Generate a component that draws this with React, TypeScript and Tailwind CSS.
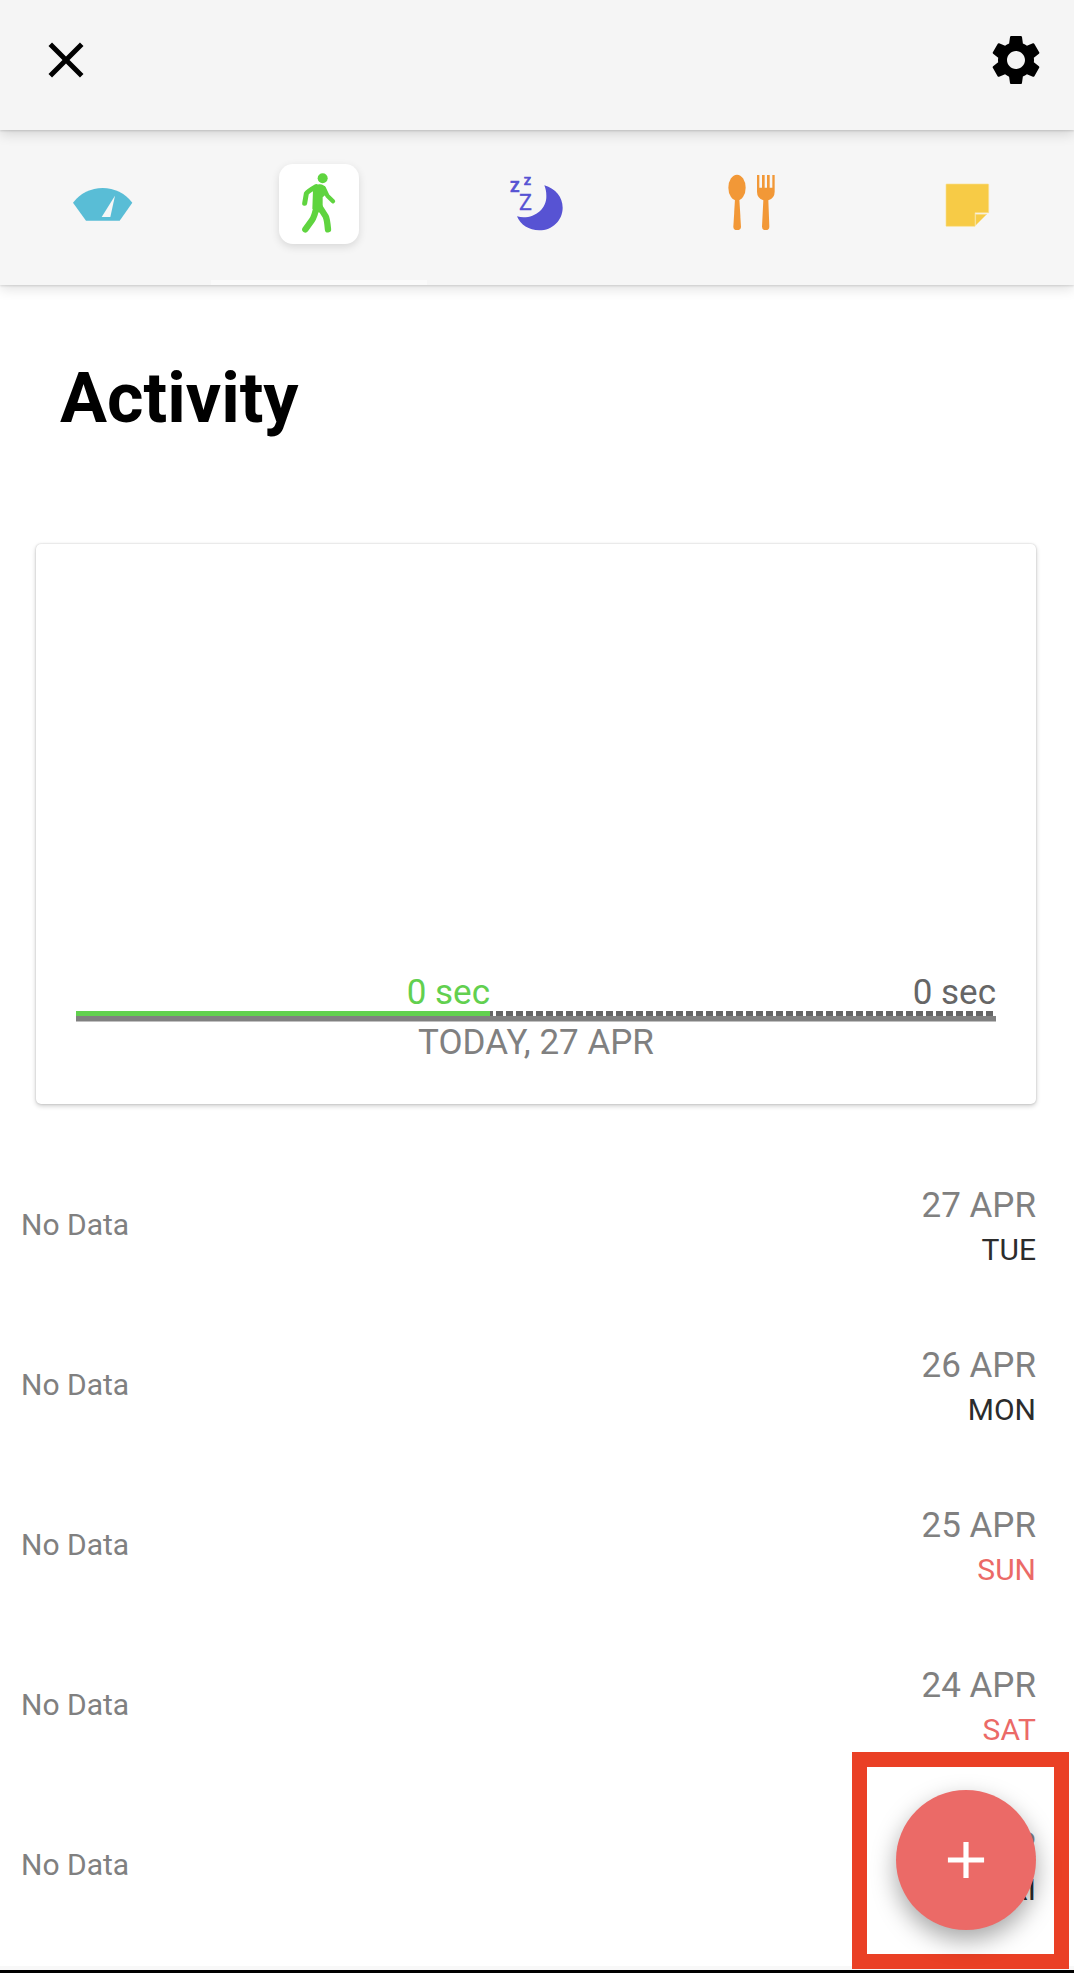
import clsx from "clsx";
import { ReactNode, useState } from "react";
import { MdAdd, MdClose, MdSettings } from "react-icons/md";

const ACTIVE_SHARE = 45;

function WeightIcon() {
  return (
    <svg viewBox="39 13 240 240" className="size-full" aria-hidden="true">
      <path
        d="M69 129A112 112 0 0 1 247 129L209 183H108Z"
        fill="#59bdd6"
      />
      <path d="M195 108L181 172H155Z" fill="#f6f6f6" />
    </svg>
  );
}

function WalkIcon() {
  return (
    <svg viewBox="27 26 240 240" className="size-full" aria-hidden="true">
      <g
        fill="none"
        stroke="#5fd43f"
        strokeLinecap="round"
        strokeLinejoin="round"
      >
        <path d="M104 144L109 115Q112 109 138 94" strokeWidth="15" />
        <path d="M161 98L172 121L189 138" strokeWidth="13" />
        <path d="M140 152Q134 184 125 196L106 222" strokeWidth="19" />
        <path d="M146 150L167 183Q171 190 174 222" strokeWidth="19" />
      </g>
      <circle cx="158" cy="69" r="15" fill="#5fd43f" />
      <path
        d="M126 95Q138 86 150 87Q162 88 166 98L172 114L158 126L158 156L148 172L127 160L129 104Z"
        fill="#5fd43f"
      />
    </svg>
  );
}

function SleepIcon() {
  return (
    <svg viewBox="15 13 240 240" className="size-full" aria-hidden="true">
      <path
        d="M163 77C197 87 218 113 218 144C218 182 187 212 148 212C117 212 91 196 81 170C125 182 171 152 169 108C169 96 167 88 163 77Z"
        fill="#5753d3"
      />
      <g
        fill="#5753d3"
        stroke="#5753d3"
        strokeWidth="1"
        className="font-['Roboto',sans-serif]"
      >
        <text x="87" y="152" fontSize="65">
          Z
        </text>
        <text x="61" y="96" fontSize="45" fontWeight="700" strokeWidth="2">
          Z
        </text>
        <text x="102" y="76" fontSize="34" fontWeight="700" strokeWidth="2">
          Z
        </text>
      </g>
    </svg>
  );
}

function FoodIcon() {
  return (
    <svg viewBox="3 13 240 240" className="size-full" aria-hidden="true">
      <g fill="#f29837">
        <ellipse cx="81" cy="84" rx="26" ry="39" />
        <path d="M75 118H88L93 201Q93 211 81 211Q70 211 70 201Z" />
        <path d="M141 46H148V84H156V46H164V84H171V46H179V84H187V46H194V96Q194 115 175 122L178 201Q178 211 167 211Q156 211 156 201L160 122Q141 115 141 96Z" />
      </g>
    </svg>
  );
}

function NoteIcon() {
  return (
    <svg viewBox="21 13 240 240" className="size-full" aria-hidden="true">
      <g fill="#f7cb46" stroke="#fae08c" strokeWidth="2">
        <path d="M80 73H204Q206 73 206 75V159H165V200H80Q78 200 78 198V75Q78 73 80 73Z" />
        <path d="M167 164H200L167 197Z" />
      </g>
    </svg>
  );
}

const tabs: { id: string; label: string; icon: ReactNode }[] = [
  { id: "weight", label: "Weight", icon: <WeightIcon /> },
  { id: "activity", label: "Activity", icon: <WalkIcon /> },
  { id: "sleep", label: "Sleep", icon: <SleepIcon /> },
  { id: "food", label: "Food", icon: <FoodIcon /> },
  { id: "notes", label: "Notes", icon: <NoteIcon /> },
];

const days = [
  { date: "27 APR", day: "TUE", weekend: false },
  { date: "26 APR", day: "MON", weekend: false },
  { date: "25 APR", day: "SUN", weekend: true },
  { date: "24 APR", day: "SAT", weekend: true },
  { date: "23 APR", day: "FRI", weekend: false },
];

function Header() {
  return (
    <header className="relative z-10 flex items-center justify-between bg-[#f5f5f5] pb-10 pl-9 pr-7 pt-[30px] shadow-[0_1px_2px_rgba(0,0,0,0.14),0_4px_12px_rgba(0,0,0,0.14)]">
      <button type="button" aria-label="Close">
        <MdClose className="size-[60px] text-black" />
      </button>
      <button type="button" aria-label="Settings">
        <MdSettings className="size-[60px] text-black" />
      </button>
    </header>
  );
}

function TabBar() {
  const [activeTab, setActiveTab] = useState("activity");

  return (
    <nav className="flex justify-between bg-[#f6f6f6] pb-[41px] pl-[63px] pr-[67px] pt-[34px] shadow-[0_1px_2px_rgba(0,0,0,0.12),0_4px_12px_rgba(0,0,0,0.12)]">
      {tabs.map((tab) => (
        <button
          key={tab.id}
          type="button"
          aria-label={tab.label}
          onClick={() => setActiveTab(tab.id)}
          className={clsx(
            "relative size-20 rounded-[14px]",
            tab.id === activeTab &&
              "bg-white shadow-[0_3px_8px_rgba(0,0,0,0.12)]",
          )}
        >
          {tab.icon}
          {tab.id === activeTab && (
            <span className="absolute -bottom-[41px] -left-[68px] h-[5px] w-[216px] bg-[#fafafa]" />
          )}
        </button>
      ))}
    </nav>
  );
}

function ChartCard() {
  return (
    <section className="ml-9 mr-[38px] flex min-h-[560px] flex-col justify-end rounded-[5px] bg-white px-10 pb-10 text-[35px] shadow-[0_0_2px_rgba(0,0,0,0.2),0_2px_5px_rgba(0,0,0,0.2)]">
      <div className="flex justify-between leading-9">
        <span
          className="text-right text-[#62d04f]"
          style={{ width: `${ACTIVE_SHARE}%` }}
        >
          0 sec
        </span>
        <span className="text-[#666666]">0 sec</span>
      </div>
      <div className="h-[5px] bg-[repeating-linear-gradient(90deg,#666666_0_7px,#ffffff_7px_10px)]">
        <div
          className="h-full bg-[#62d04f]"
          style={{ width: `${ACTIVE_SHARE}%` }}
        />
      </div>
      <div className="h-[6px] border-b border-[#c0c0c0] bg-[#808080]" />
      <p className="text-center leading-[42px] text-[#808080]">
        TODAY, 27 APR
      </p>
    </section>
  );
}

function DayList() {
  return (
    <ul className="mt-[41px] pl-[21px] pr-[38px]">
      {days.map((item) => (
        <li
          key={item.date}
          className="flex h-40 items-center justify-between text-[30px]/11"
        >
          <span className="text-[#808080]">No Data</span>
          <div className="flex flex-col pt-[5px] text-right">
            <span className="text-[35px]/11 text-[#808080]">{item.date}</span>
            <span className={item.weekend ? "text-[#eb6a67]" : "text-[#2c2c2c]"}>
              {item.day}
            </span>
          </div>
        </li>
      ))}
    </ul>
  );
}

export default function App() {
  return (
    <div className="relative flex min-h-screen flex-col bg-white font-['Roboto',sans-serif]">
      <Header />
      <TabBar />
      <main>
        <h1 className="mb-[106px] mt-[73px] px-[60px] text-[70px]/20 font-bold text-black">
          Activity
        </h1>
        <ChartCard />
        <DayList />
      </main>
      <div className="mt-auto h-[7px] border-b-[3px] border-black bg-[#f8f8f8]" />

      {/* Highlighted add button */}
      <div className="absolute bottom-1 right-[5px] border-[15px] border-[#ea4025] pb-6 pl-[29px] pr-[18px] pt-[23px]">
        <button
          type="button"
          aria-label="Add activity"
          className="flex size-[140px] items-center justify-center rounded-full bg-[#eb6a67] shadow-[0_10px_24px_rgba(0,0,0,0.35)]"
        >
          <MdAdd className="size-[62px] text-white" />
        </button>
      </div>
    </div>
  );
}
